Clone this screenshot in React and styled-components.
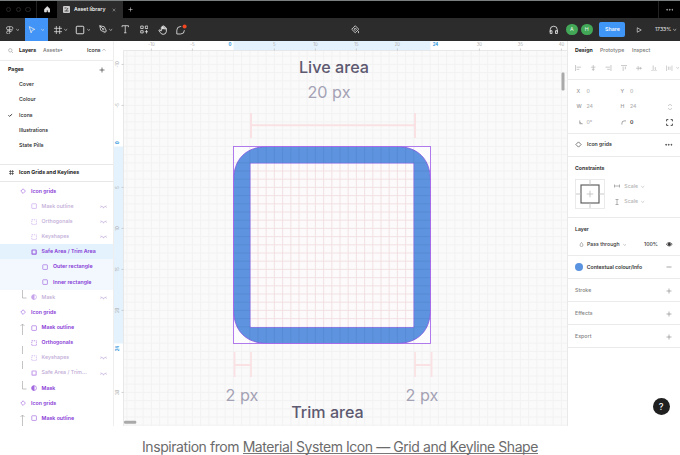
import React from "react";
import styled, { createGlobalStyle } from "styled-components";

const Global = createGlobalStyle`
  * { box-sizing: border-box; }
  body { margin: 0; background: #fff; font-family: Inter, "Liberation Sans", sans-serif; overflow: hidden; }
  svg { display: block; flex: none; }
`;

const Page = styled.div`
  width: 680px; height: 455px; display: flex; flex-direction: column; background: #fff;
  font-size: 5.2px; line-height: 1; white-space: nowrap; color: #333;
`;
const TabBar = styled.div`
  height: 18px; flex: none; display: flex; align-items: center; background: #000; border-top: 1px solid #7c7f7f;
`;
const WindowDots = styled.div`
  width: 37px; height: 100%; display: flex; align-items: center; gap: 4.2px; padding-left: 6px; border-right: 1px solid #222;
`;
const Dot = styled.i`
  width: 5.4px; height: 5.4px; border-radius: 50%; border: 1px solid #262626; flex: none;
`;
const HomeTab = styled.div`
  width: 20px; display: flex; justify-content: center;
`;
const FileTab = styled.div`
  width: 66px; height: 100%; display: flex; align-items: center; padding-left: 6px; background: #2c2c2c;
  color: #fff; font-weight: 550; font-size: 5.3px;
`;
const TabTitle = styled.span`
  width: 37.5px; margin-left: 4px; letter-spacing: -0.04px;
`;
const NewTab = styled.div` margin-left: 5px; flex: 1; `;
const TabMore = styled.div`
  width: 22px; height: 100%; display: flex; align-items: center; justify-content: center; border-left: 1px solid #222;
`;
const Toolbar = styled.div`
  height: 23px; flex: none; display: flex; align-items: center; background: #2c2c2c; color: #e6e6e6;
`;
const Tool = styled.div`
  width: ${(p) => p.$w}px; height: 100%; display: flex; align-items: center; justify-content: center; gap: 2px;
  background: ${(p) => (p.$active ? "#4295f7" : "transparent")};
`;
const Spacer = styled.div` width: ${(p) => p.$w}px; flex: none; `;
const Avatar = styled.div`
  width: 11.6px; height: 11.6px; border-radius: 50%; background: #42a757; color: #e6f5e9; font-size: 5.3px;
  display: flex; align-items: center; justify-content: center; margin-right: 3.4px; flex: none;
`;
const ShareButton = styled.div`
  width: 26px; height: 15.4px; border-radius: 2px; background: #4096f7; color: #fff; font-size: 5.3px; font-weight: 500;
  display: flex; align-items: center; justify-content: center; margin-left: 3.5px; flex: none;
`;
const ZoomLevel = styled.div`
  display: flex; align-items: center; gap: 2px; font-size: 5.2px; color: #eee; margin-left: 12.5px;
`;
const Body = styled.div` height: 385px; flex: none; display: flex; `;

const LeftPanel = styled.div`
  width: 114px; flex: none; border-right: 1px solid #eee; background: #fff; overflow: hidden;
`;
const PanelHead = styled.div`
  height: 19.5px; display: flex; align-items: center; padding-left: 8px; border-bottom: 1px solid #ececec;
`;
const HeadLabel = styled.span`
  width: ${(p) => p.$w}px; font-size: 5.25px; font-weight: ${(p) => (p.$strong ? 700 : 450)};
  color: ${(p) => (p.$muted ? "#777" : "#222")};
`;
const PageRow = styled.div`
  height: 15.15px; display: flex; align-items: center; padding-left: 8px; font-size: 5.25px; color: #222;
  font-weight: ${(p) => (p.$title ? 700 : 480)};
`;
const PageMark = styled.div` width: 11px; `;
const Pages = styled.div` height: 103.5px; padding-top: 1.7px; `;
const FrameTitle = styled.div`
  height: 18.4px; display: flex; align-items: center; gap: 5px; padding: 0 0 1px 9px; border: solid #e8e8e8; border-width: 1px 0;
  font-weight: 650; font-size: 5.25px; color: #222;
`;
const Row = styled.div`
  height: 15.15px; display: flex; align-items: center; color: #8638d6;
  background: ${(p) => (p.$state === "selected" ? "#e3f2fd" : p.$state === "child" ? "#f2f8fe" : "transparent")};
`;
const Tree = styled.div` padding-top: 1.4px; `;
const Guide = styled.div`
  width: ${(p) => p.$w}px; height: 100%; flex: none; padding-left: 20px;
`;
const RowIcon = styled.div`
  width: 11px; flex: none; opacity: ${(p) => (p.$faded ? 0.45 : 0.75)};
`;
const RowLabel = styled.span`
  flex: 1; font-size: 5.25px; font-weight: ${(p) => (p.$faded ? 450 : 600)}; color: ${(p) => (p.$faded ? "#c0abd6" : "#8638d6")};
`;
const RowEye = styled.div` width: 13px; `;

const CanvasArea = styled.div` width: 453px; height: 385px; position: relative; overflow: hidden; background: #fafafa; `;
const CanvasText = styled.div`
  position: absolute; left: ${(p) => p.$x}px; top: ${(p) => p.$y}px; width: 100px; text-align: center; line-height: 20px;
  font-size: ${(p) => p.$size}px; letter-spacing: ${(p) => p.$ls || 0}px;
  font-weight: ${(p) => (p.$strong ? 550 : 400)}; color: ${(p) => (p.$strong ? "#5d5970" : "#a4a2b4")};
`;
const RightPanel = styled.div`
  width: 113px; flex: none; position: relative; border-left: 1px solid #e9e9e9; background: #fff;
`;
const Section = styled.div`
  height: ${(p) => p.$h}px; border-bottom: 1px solid #ebebeb; padding: ${(p) => p.$pt || 0}px 0 0 7px;
`;
const Line = styled.div`
  height: ${(p) => p.$h}px; display: flex; align-items: center; font-size: 5.2px;
`;
const Cell = styled.div`
  width: ${(p) => p.$w}px; flex: none; display: flex; align-items: center; gap: 3px;
  font-weight: ${(p) => p.$weight || 450}; color: ${(p) => p.$color || "#333"}; letter-spacing: ${(p) => p.$ls || 0}px;
`;
const Constraints = styled.div` display: flex; margin-top: 3px; `;
const ConstraintInputs = styled.div` padding: 0 0 0 9px; `;
const ColorDot = styled.i` width: 8px; height: 8px; border-radius: 50%; background: #5a93df; `;
const Help = styled.div`
  position: absolute; left: 84.5px; top: 356.5px; width: 17px; height: 17px; border-radius: 50%; background: #202020; color: #fff;
  display: flex; align-items: center; justify-content: center; font-size: 9px; font-weight: 450;
`;
const Caption = styled.div`
  height: 29px; display: flex; justify-content: center; align-items: flex-start; padding-top: 13px; color: #6b6b6b;
  font-size: 14px; line-height: 15px; letter-spacing: -0.43px; white-space: pre;
`;
const Link = styled.a`
  height: 15px; border-bottom: 1px solid #777;
`;

const shapes = {
  diamond: <path d="M6 1.5 10.5 6 6 10.5 1.5 6Z" />,
  box: <rect x="1.5" y="1.5" width="9" height="9" rx="1" />,
  group: <rect x="1.5" y="1.5" width="9" height="9" strokeDasharray="2.4 1.5" />,
  bool: <rect x="2" y="2" width="8" height="8" rx="1" strokeWidth="2.3" />,
  mask: <><circle cx="6" cy="6" r="4.6" /><path d="M6 1.4a4.6 4.6 0 0 0 0 9.2Z" fill="currentColor" /></>,
  eyeOff: <path d="M1 5Q6 10 11 5M2 6 1 8M6 7.5V9M10 6l1 2" />,
  plus: <path d="M6 1v10M1 6h10" />,
  minus: <path d="M1 6h10" />,
  close: <path d="m2 2 8 8M10 2 2 10" />,
  chevron: <path d="m1 4 5 4.5L11 4" strokeWidth="2.2" />,
  chevronUp: <path d="m1 8 5-4.5L11 8" strokeWidth="1.8" />,
  check: <path d="m1 6 3 3 7-6" strokeWidth="2.2" />,
  search: <><circle cx="5" cy="5" r="3.7" /><path d="m8 8 3.3 3.3" /></>,
  hash: <path d="M3.5 0v12M8.5 0v12M0 3.5h12M0 8.5h12" />,
  figma: <path d="M3 1h5a2.3 2.3 0 0 1 0 4.6H3A2.3 2.3 0 0 1 3 1ZM5.5 1v8.5A2.3 2.3 0 1 1 3 7.5h2.5M3 5.6v2M8 5.6a1.6 1.6 0 1 1-2.5 1.3" />,
  cursor: <path d="m2 1 9 4.5-4.2 1.2L5 11Z" />,
  pen: <><path d="m1 1 6.5 1.5 2.5 5L7.5 10l-5-2.5ZM1 1l4.5 4.5M7.5 11.5l4-4" /><circle cx="6" cy="6" r=".9" /></>,
  type: <path d="M1.5 3V1h9v2M6 1v10M4.3 11h3.4" />,
  resources: <path d="M1 1.5h3.5V5H1ZM7.5 1.5H11V5H7.5ZM1 8h3.5v3.2H1ZM9.2 7v5M6.8 9.5h5" />,
  hand: <path d="M4 7V2.5q.8-1 1.5 0V5 1.3q.8-.9 1.5 0V5 2.2q.8-.9 1.5 0v3-1.5q.8-.7 1.5 0V8q-.4 3.2-3.7 3.2Q4 11.3 2.8 9L1 6.3q.8-1.2 3 .7" />,
  home: <path d="M1 6 6 1l5 5v5H7.5V7.5h-3V11H1Z" fill="currentColor" />,
  phones: <path d="M1.5 9V6a4.5 4.5 0 0 1 9 0v3M1.5 7.2h2.3v3.6H1.5ZM8.2 7.2h2.3v3.6H8.2Z" />,
  play: <path d="m2.5 1.5 8 4.5-8 4.5Z" />,
  bucket: <><path d="M6 1 11 6 6 11 1 6Z" /><path d="M4.2 6 6 4.2 7.8 6 6 7.8ZM10.5 8.5v3" /></>,
  left: <path d="M1 0v12M3 4h8M3 8h5" />,
  center: <path d="M6 0v12M2 4h8M3.5 8h5" />,
  right: <path d="M11 0v12M1 4h8M4 8h5" />,
  top: <path d="M0 1h12M4 3v8M8 3v5" />,
  middle: <path d="M0 6h12M4 2v8M8 3.5v5" />,
  bottom: <path d="M0 11h12M4 1v8M8 4v5" />,
  distribute: <path d="M1 1v10M11 1v10M4.5 3v6M7.5 3v6" />,
  angle: <path d="M2 1v9h8M2 6q3 0 4 4" />,
  corner: <path d="M2 10V7q0-5 5-5h4" />,
  expand: <path d="M1 4V1h3M8 1h3v3M11 8v3H8M4 11H1V8" strokeWidth="1.5" />,
  link: <path d="M3 4V2.5Q6-1 9 2.5V4M3 8v1.5q3 3.5 6 0V8" />,
  horizontal: <path d="M1 3v6M11 3v6M1 6h10" />,
  vertical: <path d="M3 1h6M3 11h6M6 1v10" />,
  drop: <path d="M6 1q3.5 4 3.5 6.5a3.5 3.5 0 0 1-7 0Q2.5 5 6 1Z" />,
  eye: <><path d="M.5 6Q6-.5 11.5 6 6 12.5.5 6Z" /><circle cx="6" cy="6" r="2.2" fill="currentColor" /></>,
  dots: <><circle cx="1.8" cy="6" r=".8" fill="currentColor" /><circle cx="6" cy="6" r=".8" fill="currentColor" /><circle cx="10.2" cy="6" r=".8" fill="currentColor" /></>,
};
const Icon = ({ name, size = 6, color = "currentColor", sw = 1.3 }) => (
  <svg width={size} height={size} viewBox="0 0 12 12" fill="none" stroke="currentColor" color={color} strokeWidth={sw}>
    {shapes[name]}
  </svg>
);

const rows = [
  ["Icon grids", "diamond", 0],
  ["Mask outline", "box", 1, 1],
  ["Orthogonals", "group", 1, 1],
  ["Keyshapes", "group", 1, 1],
  ["Safe Area / Trim Area", "bool", 1, 0, "selected"],
  ["Outer rectangle", "box", 2, 0, "child"],
  ["Inner rectangle", "box", 2, 0, "child"],
  ["Mask", "mask", 1, 1, "", "end"],
  ["Icon grids", "diamond", 0],
  ["Mask outline", "box", 1, 0, "", "start"],
  ["Orthogonals", "group", 1],
  ["Keyshapes", "group", 1, 1, "", "mid"],
  ["Safe Area / Trim...", "bool", 1, 1, "", "mid"],
  ["Mask", "mask", 1, 0, "", "end"],
  ["Icon grids", "diamond", 0],
  ["Mask outline", "box", 1, 0, "", "start"],
];
const guides = { end: "M2.5 0v8h4", start: "M2.5 15V4M.5 6l2-2 2 2", mid: "M2.5 -4v8" };
const indent = [19.5, 30.6, 42];

function Layers() {
  return (
    <LeftPanel>
      <PanelHead>
        <Icon name="search" size={5.5} color="#999" /><Spacer $w={5.5} />
        <HeadLabel $w={24} $strong>Layers</HeadLabel>
        <HeadLabel $w={44} $muted>Assets<b>•</b></HeadLabel>
        <HeadLabel $w={15}>Icons</HeadLabel>
        <Icon name="chevronUp" size={4} color="#999" />
      </PanelHead>
      <Pages>
        <PageRow $title><HeadLabel $w={91} $strong>Pages</HeadLabel><Icon name="plus" color="#333" /></PageRow>
        {["Cover", "Colour", "Icons", "Illustrations", "State Pills"].map((name) => (
          <PageRow key={name}>
            <PageMark>{name === "Icons" && <Icon name="check" size={4.5} />}</PageMark>{name}
          </PageRow>
        ))}
      </Pages>
      <FrameTitle><Icon name="hash" size={5} />Icon Grids and Keylines</FrameTitle>
      <Tree>
        {rows.map(([label, icon, depth, faded, state, guide], i) => (
          <Row key={i} $state={state}>
            <Guide $w={indent[depth]}>
              {guide && <svg width="8" height="15" fill="none" stroke="#aaa" strokeWidth=".7" overflow="visible"><path d={guides[guide]} /></svg>}
            </Guide>
            <RowIcon $faded={faded}><Icon name={icon} size={6.2} /></RowIcon>
            <RowLabel $faded={faded}>{label}</RowLabel>
            <RowEye>{!!faded && <Icon name="eyeOff" size={7} color="#c4afdb" />}</RowEye>
          </Row>
        ))}
      </Tree>
    </LeftPanel>
  );
}

const U = 8.2;
const X0 = 119.4;
const Y0 = 105.4;
const marks = [-10, -5, 0, 5, 10, 15, 20, 24, 30, 35, 40];
const span = (from, to) => Array.from({ length: to - from + 1 }, (_, i) => from + i);

function Canvas() {
  return (
    <CanvasArea>
      <svg width="453" height="385" fontFamily="Inter, sans-serif" fontSize="4.3" textAnchor="middle">
        <g stroke="#f2f2f3" strokeWidth="1">
          {span(-13, 40).map((n) => <path key={n} d={`M${X0 + n * U} 10V385`} />)}
          {span(-12, 34).map((n) => <path key={n} d={`M10 ${Y0 + n * U}H453`} />)}
        </g>
        <rect x="119.4" y="105.4" width="197" height="197" fill="#fcfbfd" />
        <path fillRule="evenodd" fill="#5d93df" stroke="#8557e2" strokeWidth=".8"
          d="M154 105.5H282C304 105.5 316.5 118 316.5 140V268C316.5 290 304 302.5 282 302.5H154C132 302.5 119.5 290 119.5 268V140C119.5 118 132 105.5 154 105.5ZM136.3 122.3V286.2H299.7V122.3Z" />
        <rect x="136.7" y="122.7" width="162.6" height="163.1" fill="#fcfafa" />
        <g stroke="#b8485c" strokeWidth=".8" opacity=".16">
          {span(3, 21).map((n) => <path key={n} d={`M${X0 + n * U} 123V286`} />)}
          {span(3, 21).map((n) => <path key={n} d={`M137 ${Y0 + n * U}H299.5`} />)}
        </g>
        <g stroke="#243f77" strokeWidth=".8" opacity=".12">
          {span(2, 22).map((n) => <path key={n} d={`M${X0 + n * U} 106v16.5M${X0 + n * U} 286v16.5M120 ${Y0 + n * U}h16.5M300 ${Y0 + n * U}h16.5`} />)}
        </g>
        <rect x="119.5" y="105.5" width="197" height="197" fill="none" stroke="#a86ceb" strokeWidth=".9" />
        <g fill="none" stroke="#fae2e4" strokeWidth="2">
          <path d="M137 72v25M301 72v25M137 84.3H301" />
          <path d="M120.5 311v25M137 311v25M120.5 324H137M301 311v25M317.5 311v25M301 324h16.5" strokeWidth="1.8" />
        </g>
        <path d="M0 0H453V10H0ZM0 0H10V385H0Z" fill="#fff" />
        <path d="M119.5 0H316.5V9.5H119.5ZM0 105.5H9.5V302.5H0Z" fill="#e4f2fd" />
        <path d="M9.5 385V9.5H453" fill="none" stroke="#e2e2e2" strokeWidth=".8" />
        <g>
          {marks.map((n) => {
            const edge = n === 0 || n === 24;
            const shift = n === 0 ? -3.5 : n === 24 ? 5.3 : 0;
            const x = X0 + n * U + shift;
            const y = Y0 + n * U + shift;
            const look = { fill: edge ? "#2d97dc" : "#aaa", fontWeight: edge ? 700 : 400 };
            return (
              <g key={n}>
                <text x={x} y="4.9" {...look}>{n}</text>
                {n < 35 && <text transform={`translate(5.1 ${y}) rotate(-90)`} {...look}>{n}</text>}
                {!edge && <path d={`M${x} 7.5v2M7.5 ${y}h2`} stroke="#bbb" strokeWidth=".7" />}
              </g>
            );
          })}
        </g>
        <rect x="447.5" y="31.5" width="3" height="18" rx="1.2" fill="#a9a9a9" />
        <rect x="10" y="379.8" width="12.3" height="3" rx="1.2" fill="#a9a9a9" />
      </svg>
      <CanvasText $x={170} $y={16} $size={16.2} $strong>Live area</CanvasText>
      <CanvasText $x={165} $y={40.5} $size={16.2}>20 px</CanvasText>
      <CanvasText $x={78} $y={344} $size={16.2}>2 px</CanvasText>
      <CanvasText $x={258} $y={344} $size={16.2}>2 px</CanvasText>
      <CanvasText $x={163.5} $y={361} $size={16.1} $strong>Trim area</CanvasText>
    </CanvasArea>
  );
}

function Inspector() {
  const gray = "#b3b3b3";
  return (
    <RightPanel>
      <Section $h={39} $pt={2}>
        <Line $h={15}>
          <Cell $w={25} $weight={700} $color="#222">Design</Cell>
          <Cell $w={32} $color="#777">Prototype</Cell>
          <Cell $w={25} $color="#777">Inspect</Cell>
        </Line>
        <Line $h={20}>
          {["left", "center", "right", "top", "middle", "bottom"].map((n) => (
            <Cell key={n} $w={15.2} $color="#b3b3b3"><Icon name={n} size={6.5} sw={1.3} /></Cell>
          ))}
          <Cell $w={14} $color="#b3b3b3"><Icon name="distribute" size={6.5} sw={1.1} /><Icon name="chevron" size={3.5} /></Cell>
        </Line>
      </Section>
      <Section $h={53.5} $pt={4.3}>
        <Line $h={15.2}><Cell $w={11.5} $color="#999">&nbsp;X</Cell><Cell $w={34} $color={gray}>0</Cell><Cell $w={9.5} $color="#999">Y</Cell><Cell $w={30} $color={gray}>0</Cell></Line>
        <Line $h={15.2}><Cell $w={11.5} $color="#999">&nbsp;W</Cell><Cell $w={34} $color={gray}>24</Cell><Cell $w={9.5} $color="#999">H</Cell><Cell $w={36.5} $color={gray}>24</Cell><Icon name="link" color={gray} /></Line>
        <Line $h={15.2}><Cell $w={11.5} $color="#777">&nbsp;<Icon name="angle" size={4.5} sw={1.5} /></Cell><Cell $w={34} $color={gray}>0°</Cell><Cell $w={9.5} $color="#666"><Icon name="corner" size={5.5} /></Cell><Cell $w={36} $weight={600}>0</Cell><Icon name="expand" size={7} /></Line>
      </Section>
      <Section $h={23}>
        <Line $h={22.5}><Cell $w={12}><Icon name="diamond" size={7} color="#555" /></Cell><Cell $w={78} $weight={600}>Icon grids</Cell><Icon name="dots" size={7.5} sw={1} /></Line>
      </Section>
      <Section $h={61} $pt={4.3}>
        <Line $h={15}><Cell $w={60} $weight={650}>Constraints</Cell></Line>
        <Constraints>
          <svg width="30" height="30" fill="none" stroke="#bbb" strokeWidth=".8">
            <rect x=".5" y=".5" width="29" height="29" stroke="#e5e5e5" />
            <rect x="6" y="6" width="18" height="18" stroke="#555" strokeWidth="1.1" />
            <path d="M15 1v5M15 24v5M1 15h5M24 15h5M15 11.7v6.6M11.7 15h6.6" />
          </svg>
          <ConstraintInputs>
            {["horizontal", "vertical"].map((n) => (
              <Line key={n} $h={15.2}><Cell $w={10.3} $color="#888"><Icon name={n} size={6} /></Cell><Cell $w={30} $color="#b3b3b3">Scale<Icon name="chevron" size={3.5} /></Cell></Line>
            ))}
          </ConstraintInputs>
        </Constraints>
      </Section>
      <Section $h={38.5} $pt={4.3}>
        <Line $h={15}><Cell $w={60} $weight={600}>Layer</Cell></Line>
        <Line $h={15.2}>
          <Cell $w={12} $color="#777">&nbsp;<Icon name="drop" size={5} /></Cell>
          <Cell $w={57} $weight={550}>Pass through<Icon name="chevron" size={3.5} color="#aaa" /></Cell>
          <Cell $w={22.3} $weight={500}>100%</Cell><Icon name="eye" size={6.5} />
        </Line>
      </Section>
      <Section $h={23}>
        <Line $h={22.5}><Cell $w={11.8}><ColorDot /></Cell><Cell $w={79.5} $weight={600} $ls={-0.03}>Contextual colour/Info</Cell><Icon name="minus" size={6} color="#777" /></Line>
      </Section>
      {["Stroke", "Effects", "Export"].map((name) => (
        <Section key={name} $h={23.1}>
          <Line $h={23.5}><Cell $w={91.3} $color="#808080" $weight={550} $ls={0.04}>{name}</Cell><Icon name="plus" size={6} color="#888" /></Line>
        </Section>
      ))}
      <Help>?</Help>
    </RightPanel>
  );
}

const tools = [
  ["hash", 25.5, 8, true], ["box", 18, 10, true], ["pen", 28, 8.5, true],
  ["type", 11, 8.5], ["resources", 27, 8.5], ["hand", 10, 10],
];

export default function App() {
  return (
    <Page>
      <Global />
      <TabBar>
        <WindowDots><Dot /><Dot /><Dot /></WindowDots>
        <HomeTab><Icon name="home" size={6.5} color="#ddd" /></HomeTab>
        <FileTab>
          <svg width="7" height="7"><rect width="7" height="7" rx="1" fill="#ccc" /><path d="M1.5 2h2M1.5 5h4M5 2l-2 3" stroke="#555" /></svg>
          <TabTitle>Asset library</TabTitle>
          <Icon name="close" size={4} color="#ccc" />
        </FileTab>
        <NewTab><Icon name="plus" size={5} color="#ddd" /></NewTab>
        <TabMore><Icon name="dots" size={7.5} color="#bbb" sw={1} /></TabMore>
      </TabBar>
      <Toolbar>
        <Tool $w={25}><Icon name="figma" size={8} sw={1} /><Icon name="chevron" size={3.5} /></Tool>
        <Tool $w={22.5} $active><Icon name="cursor" size={7.5} /><Spacer $w={1} /><Icon name="chevron" size={3.5} /></Tool>
        <Spacer $w={0.5} />
        {tools.map(([name, w, size, menu]) => (
          <Tool key={name} $w={w}><Icon name={name} size={size} sw={1.1} />{menu && <Icon name="chevron" size={3.5} />}</Tool>
        ))}
        <Spacer $w={7.5} />
        <svg width="12" height="12" viewBox="0 0 12 12" fill="none" stroke="#eee" strokeWidth=".8">
          <path d="M6.2 2.5H5.5A3.8 3.8 0 0 0 1.8 6.2V10H5.6A3.8 3.8 0 0 0 9.4 6.2" /><circle cx="9.6" cy="2.6" r="2" fill="#f24722" stroke="none" />
        </svg>
        <Spacer $w={163.7} />
        <Icon name="bucket" size={8.5} sw={1.1} />
        <Spacer $w={190.3} />
        <Icon name="phones" size={9.5} sw={1.1} />
        <Spacer $w={7} />
        <Avatar>A</Avatar><Avatar>H</Avatar>
        <ShareButton>Share</ShareButton>
        <Spacer $w={11} />
        <Icon name="play" size={6} />
        <ZoomLevel>1733%<Icon name="chevron" size={3.5} /></ZoomLevel>
      </Toolbar>
      <Body><Layers /><Canvas /><Inspector /></Body>
      <Caption>Inspiration from <Link>Material System Icon — Grid and Keyline Shape</Link></Caption>
    </Page>
  );
}
